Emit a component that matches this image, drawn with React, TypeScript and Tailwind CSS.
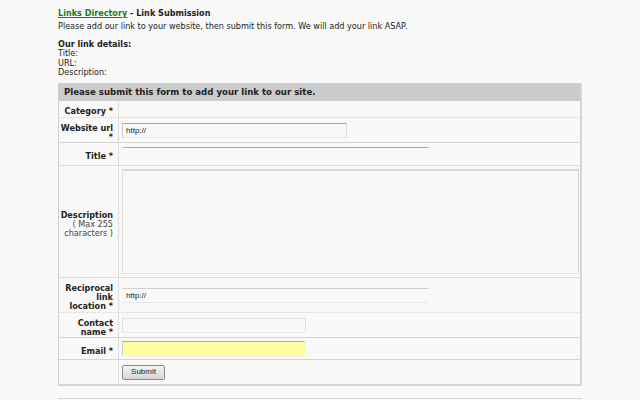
import React from "react";

const font = { fontFamily: "'DejaVu Sans', Verdana, sans-serif" };

function Row({
  label,
  sub,
  h,
  border = "border-b border-[#dcdcdc]",
  children,
}: {
  label?: React.ReactNode;
  sub?: React.ReactNode;
  h: string;
  border?: string;
  children?: React.ReactNode;
}) {
  return (
    <div className={`flex ${h} ${border}`}>
      <div className="flex w-[60px] shrink-0 flex-col items-end justify-center border-r border-[#dcdcdc] pr-[5px] pt-[5px] text-right leading-[8.8px]">
        {label && <span className="font-bold text-[#222]">{label}</span>}
        {sub && <span className="text-[#444]">{sub}</span>}
      </div>
      <div className="flex flex-1 flex-col justify-center pl-[3px]">{children}</div>
    </div>
  );
}

const inputBase =
  "h-[15px] border border-t-[#a8a8a8] border-l-[#c8c8c8] border-r-[#dcdcdc] border-b-[#e8e8e8] bg-[#f9f9f9] px-[3px] text-[8px] text-[#222] outline-none";

export default function App() {
  return (
    <div className="min-h-[400px] bg-[#f9f9f9] text-[8.1px] text-[#222]" style={font}>
      <div className="ml-[58px] w-[524px] pt-[8px]">
        <div className="leading-[10px] font-bold">
          <a href="#" className="text-[#1d7a1d] underline">
            Links Directory
          </a>{" "}
          - Link Submission
        </div>
        <p className="mt-[3px] leading-[10px]">
          Please add our link to your website, then submit this form. We will add your link ASAP.
        </p>
        <div className="mt-[9px] leading-[9.3px]">
          <div className="font-bold">Our link details:</div>
          <div>Title:</div>
          <div>URL:</div>
          <div>Description:</div>
        </div>

        <div className="mt-[6px] border-l border-b-2 border-r-2 border-l-[#d0d0d0] border-b-[#d6d6d6] border-r-[#d6d6d6]">
          <div className="flex h-[18px] items-center bg-[#cccccc] pl-[5px] pt-[1px] text-[8.6px] font-bold text-[#222]">
            Please submit this form to add your link to our site.
          </div>
          <Row label="Category *" h="h-[17px]" border="border-b border-dotted border-[#d0d0d0]" />
          <Row label={<>Website url<br />*</>} h="h-[25px]" border="border-b border-[#d4d4d4]">
            <input
              defaultValue="http://"
              className={`${inputBase} w-[225px]`}
              style={{ fontFamily: "'Liberation Sans', Arial, sans-serif" }}
            />
          </Row>
          <Row label="Title *" h="h-[23px]">
            <input
              className={`${inputBase} w-[307px] border-l-transparent border-r-transparent border-b-transparent`}
            />
          </Row>
          <Row
            label="Description"
            sub={<>( Max 255<br />characters )</>}
            h="h-[112px]"
          >
            <textarea className="h-[105px] w-[457px] resize-none border border-t-[#d8d8d8] border-l-[#dedede] border-r-[#d0d0d0] border-b-[#e4e4e4] border-t-2 bg-[#f9f9f9] outline-none" />
          </Row>
          <Row
            label={<>Reciprocal<br />link<br />location *</>}
            h="h-[35px]"
            border="border-b border-dotted border-[#d6d6d6]"
          >
            <input
              defaultValue="http://"
              className={`${inputBase} w-[307px] border-l-transparent border-r-transparent border-t-[#cfcfcf] border-b-[#e0e0e0]`}
              style={{ fontFamily: "'Liberation Sans', Arial, sans-serif" }}
            />
          </Row>
          <Row label={<>Contact<br />name *</>} h="h-[25px]" border="border-b border-[#d4d4d4]">
            <input
              className={`${inputBase} w-[184px] border-t-[#e0e0e0] border-l-[#e0e0e0] border-r-[#e0e0e0] border-b-[#e8e8e8]`}
            />
          </Row>
          <Row label="Email *" h="h-[22px]" border="border-b border-[#d4d4d4]">
            <input
              className={`${inputBase} w-[183px] border-t-[#7a7a7a] border-l-[#7a7a7a] border-r-[#fafaa0] border-b-[#fafaa0] bg-[#ffffa0]`}
            />
          </Row>
          <Row h="h-[24px]" border="">
            <button
              type="button"
              className="h-[15px] w-[43px] rounded-[2px] border border-[#8a8a8a] bg-gradient-to-b from-[#f4f4f4] to-[#d8d8d8] text-[8px] text-[#222]"
              style={{ fontFamily: "'Liberation Sans', Arial, sans-serif" }}
            >
              Submit
            </button>
          </Row>
        </div>
        <div className="mt-[12px] h-[4px] border-t border-[#d8d8d8]" />
      </div>
    </div>
  );
}
